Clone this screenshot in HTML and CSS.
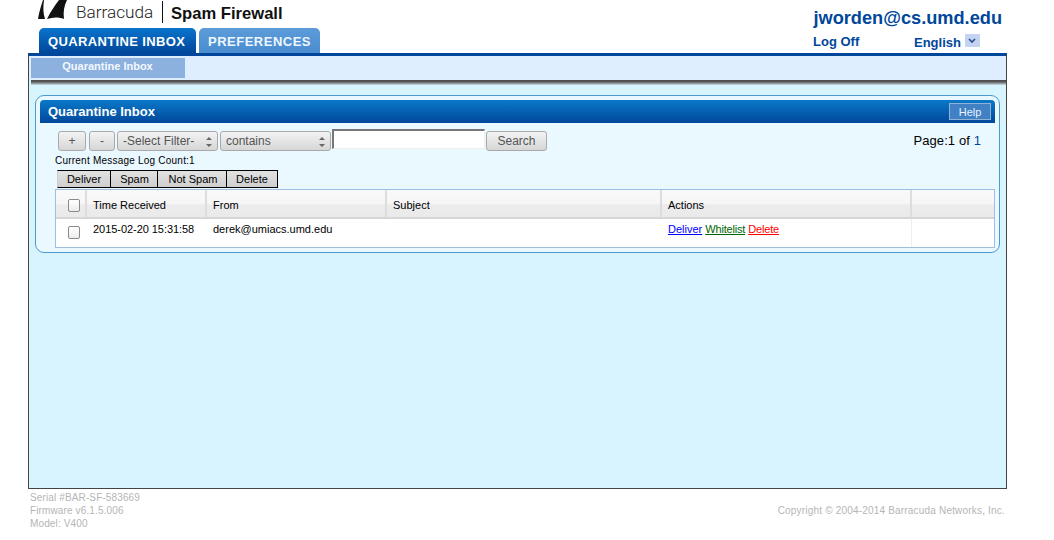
FILE: index.html
```html
<!DOCTYPE html>
<html lang="en">
<head>
<meta charset="utf-8">
<title>Quarantine Inbox</title>
<link rel="stylesheet" href="styles.css">
</head>
<body>
<div class="page">
  <header class="top">
    <div class="brand-col">
      <div class="logo">
        <svg class="fin" width="29" height="20" viewBox="0 0 29 20">
          <path d="M0 19 C1 12 3 6 5 0 L6 0 C5 7 5 13 7 19 Z" fill="#111"/>
          <path d="M9 19 C13 11 17 5 21 0 L29 0 C26 6 25 12 26 19 C21 17 15 17 9 19 Z" fill="#111"/>
        </svg>
        <span class="logo-name">Barracuda</span>
        <span class="logo-sep"></span>
        <span class="logo-product">Spam Firewall</span>
      </div>
      <nav class="tabs">
        <a class="tab tab-on">QUARANTINE INBOX</a>
        <a class="tab tab-off">PREFERENCES</a>
      </nav>
    </div>
    <div class="user-col">
      <div class="user">jworden@cs.umd.edu</div>
      <div class="user-links">
        <span class="logoff">Log Off</span>
        <span class="lang"><span class="lang-text">English</span>
          <span class="lang-btn"><svg width="8" height="6" viewBox="0 0 8 6"><path d="M1 1 L4 4 L7 1" fill="none" stroke="#2c4f8c" stroke-width="1.6"/></svg></span>
        </span>
      </div>
    </div>
  </header>

  <main class="frame">
    <div class="subnav"><span class="subtab">Quarantine Inbox</span></div>
    <div class="subshadow"></div>
    <div class="content">
      <section class="panel">
        <div class="panel-head">
          <span class="panel-title">Quarantine Inbox</span>
          <span class="help">Help</span>
        </div>
        <div class="filters">
          <span class="btn btn-plus">+</span>
          <span class="btn btn-minus">-</span>
          <span class="btn sel sel-a">-Select Filter-<svg class="updown" width="8" height="14" viewBox="0 0 8 14"><path d="M1 5 L4 2 L7 5 Z M1 9 L4 12 L7 9 Z" fill="#666"/></svg></span>
          <span class="btn sel sel-b">contains<svg class="updown" width="8" height="14" viewBox="0 0 8 14"><path d="M1 5 L4 2 L7 5 Z M1 9 L4 12 L7 9 Z" fill="#666"/></svg></span>
          <span class="textbox"></span>
          <span class="btn btn-search">Search</span>
          <span class="pager">Page:1 of <span class="pager-n">1</span></span>
        </div>
        <div class="count">Current Message Log Count:1</div>
        <div class="bulk">
          <span class="bulk-btn b1">Deliver</span><span class="bulk-btn b2">Spam</span><span class="bulk-btn b3">Not Spam</span><span class="bulk-btn b4">Delete</span>
        </div>
        <div class="grid">
          <div class="row head">
            <div class="c c1"><span class="check"></span></div>
            <div class="c c2">Time Received</div>
            <div class="c c3">From</div>
            <div class="c c4">Subject</div>
            <div class="c c5">Actions</div>
            <div class="c c6"></div>
          </div>
          <div class="row body">
            <div class="c c1"><span class="check"></span></div>
            <div class="c c2 date">2015-02-20 15:31:58</div>
            <div class="c c3">derek@umiacs.umd.edu</div>
            <div class="c c4"></div>
            <div class="c c5"><a class="act blue">Deliver</a> <a class="act green">Whitelist</a> <a class="act red">Delete</a></div>
            <div class="c c6"></div>
          </div>
        </div>
      </section>
    </div>
  </main>

  <footer class="foot">
    <div>Serial #BAR-SF-583669<br>Firmware v6.1.5.006<br>Model: V400</div>
    <div class="copy">Copyright © 2004-2014 Barracuda Networks, Inc.</div>
  </footer>
</div>
</body>
</html>
```
FILE: styles.css
```css
* { box-sizing: border-box; }
html, body { margin: 0; padding: 0; background: #fff; }
body { font-family: "Liberation Sans", Arial, sans-serif; color: #000; overflow: hidden; }
.page { width: 1054px; height: 540px; padding-left: 28px; }

.top { width: 979px; height: 53px; display: flex; justify-content: space-between; }
.brand-col { padding-left: 11px; }
.logo { height: 28px; display: flex; align-items: flex-start; margin-left: -1px; }
.fin { display: block; margin-right: 9px; }
.logo-name { font-family: Roboto, "Liberation Sans", sans-serif; font-weight: 300; font-size: 17.2px; line-height: 25px; color: #222; width: 86px; }
.logo-sep { width: 1px; height: 22px; margin-top: 1px; background: #111; margin-right: 8px; }
.logo-product { font-size: 16.6px; font-weight: bold; line-height: 27px; color: #111; }
.tabs { display: flex; gap: 3px; }
.tab { height: 25px; padding: 0 9px; border-radius: 5px 5px 0 0; color: #fff; font-size: 13px; font-weight: bold; line-height: 27px; letter-spacing: 0.36px; white-space: nowrap; }
.tab-on { width: 157px; background: linear-gradient(#0a74cc, #01479b); }
.tab-off { width: 121px; background: linear-gradient(#5d9bd8, #4a8dd0); letter-spacing: 0.5px; color: #eef6ff; }

.user-col { width: 194px; color: #00479b; font-weight: bold; }
.user { font-size: 18.2px; line-height: 22px; margin-top: 7px; padding-right: 5px; text-align: right; white-space: nowrap; }
.user-links { display: flex; font-size: 13px; line-height: 16px; margin-top: 5px; }
.logoff { width: 101px; }
.lang { display: flex; align-items: flex-start; gap: 4px; height: 18px; }
.lang-text { margin-top: 1px; }
.lang-btn { width: 15px; height: 13px; background: #c3d3f2; border-radius: 1px; display: flex; align-items: center; justify-content: center; }

.frame { width: 979px; height: 436px; border: 1px solid #444; border-top: 3px solid #00479b; background: #d7f4ff; display: flex; flex-direction: column; }
.subnav { height: 24px; background: #deeeff; padding: 2px 0 0 2px; flex: none; }
.subtab { display: block; width: 154px; height: 20px; padding-right: 1px; background: #8cb1de; color: #f3f8ff; font-size: 11px; font-weight: bold; line-height: 17px; text-align: center; }
.subshadow { height: 5px; flex: none; margin-left: 2px; background: linear-gradient(#4a4a4a, #5c5c5c 40%, #a6b4bb 80%, #c8dfe8); }
.content { flex: 1; padding: 10px 6px 0 6px; }

.panel { width: 965px; height: 158px; border: 1px solid #4a9ad0; border-radius: 9px; background: #eaf8ff; padding: 4px 4px 0 4px; }
.panel-head { height: 23px; background: linear-gradient(#0a78c8, #01489c); border-radius: 4px 4px 0 0; display: flex; justify-content: space-between; align-items: center; padding: 0 4px 0 8px; }
.panel-title { color: #fff; font-size: 13px; font-weight: bold; }
.help { width: 42px; height: 17px; border: 1px solid #8eb3d8; background: #4280c4; color: #e8f2ff; font-size: 11px; line-height: 16px; text-align: center; }

.filters { display: flex; align-items: flex-start; margin-top: 7px; padding-left: 18px; height: 21px; }
.btn { height: 20px; margin-top: 1px; border: 1px solid #a9a9a9; border-radius: 3px; background: linear-gradient(#f3f3f3, #d6d6d6); color: #555; font-size: 12px; line-height: 18px; margin-right: 2px; }
.btn-plus { width: 28px; text-align: center; margin-right: 3px; }
.btn-minus { width: 26px; text-align: center; }
.sel { padding-left: 5px; position: relative; }
.sel-a { width: 101px; }
.sel-b { width: 111px; margin-right: 1px; }
.updown { position: absolute; right: 4px; top: 3px; }
.textbox { width: 153px; height: 20px; margin-top: -1px; background: #fff; border-top: 2px solid #777; border-left: 2px solid #777; border-right: 1px solid #eee; border-bottom: 1px solid #eee; margin-right: 1px; }
.btn-search { width: 61px; text-align: center; }
.pager { margin-left: auto; margin-right: 14px; font-size: 13px; line-height: 20px; letter-spacing: 0.1px; margin-top: 1px; }
.pager-n { color: #00479b; }

.count { font-size: 10px; line-height: 12px; margin: 4px 0 0 15px; letter-spacing: 0.22px; white-space: nowrap; }
.bulk { display: flex; margin: 3px 0 0 17px; height: 18px; }
.bulk-btn { height: 18px; border: 1px solid #000; border-left: 0; background: linear-gradient(#e2e2e2, #cfcfcf); font-size: 11px; line-height: 16px; text-align: center; }
.b1 { width: 54px; border-left: 1px solid #ccc; }
.b2 { width: 47px; padding-left: 1px; }
.b3 { width: 69px; padding-left: 2px; }
.b4 { width: 51px; }

.grid { width: 940px; height: 59px; margin: 1px 0 0 15px; border: 1px solid #9fbfe0; background: #fff; font-size: 11px; }
.row { display: flex; }
.head { height: 29px; background: linear-gradient(#f9f9f9 0, #f6f6f6 50%, #ececee 55%, #eaeaea 100%); border-bottom: 2px solid #d6d6d6; line-height: 30px; }
.body { height: 28px; line-height: 20px; }
.c { padding-left: 6px; flex: none; white-space: nowrap; }
.head .c { border-right: 2px solid #ddd; }
.c1 { width: 31px; display: flex; align-items: flex-start; padding: 0 0 0 12px; }
.c2 { width: 120px; }
.c3 { width: 180px; }
.c4 { width: 275px; }
.c5 { width: 250px; }
.c6 { width: 81px; }
.head .c6 { border-right: 0; }
.body .c5 { border-right: 1px solid #eee; }
.check { width: 12px; height: 13px; border: 1px solid #8a8a8a; border-radius: 2px; background: linear-gradient(#fff, #ececec); display: block; margin-top: 9px; }
.body .check { margin-top: 7px; }
.date { letter-spacing: -0.05px; }
.act { text-decoration: underline; }
.blue { color: #0000ff; }
.green { color: #006400; letter-spacing: -0.2px; }
.red { color: #ff0000; letter-spacing: -0.15px; }

.foot { width: 977px; display: flex; justify-content: space-between; align-items: center; padding: 2px 0 0 2px; color: #b5b5b5; font-size: 10px; line-height: 13px; letter-spacing: 0.13px; }
.copy { letter-spacing: 0.19px; }
```
